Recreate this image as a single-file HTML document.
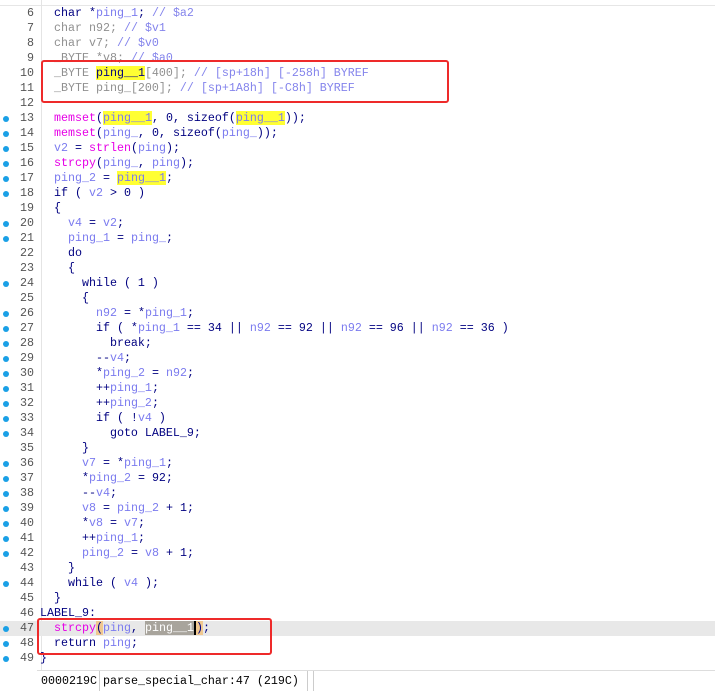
<!DOCTYPE html>
<html><head><meta charset="utf-8"><style>
body{margin:0;width:715px;height:690px;background:#fff;overflow:hidden;position:relative;font-family:"Liberation Mono",monospace;font-size:11.67px}
.top{position:absolute;left:0;top:0;width:715px;height:5px;border-bottom:1px solid #e6e6e6}
.gut{position:absolute;left:41px;top:0;width:1px;height:690px;background:#e4e4e4}
.l{position:absolute;left:0;height:15px;line-height:15px;white-space:pre;width:715px}
.n{position:absolute;left:0;width:34px;text-align:right;color:#555}
.d{position:absolute;left:3px;top:5px;width:6px;height:6px;border-radius:50%;background:#1aa0e6}
.c{position:absolute;left:40px;color:#000080}
.v{color:#7b7bef}.f{color:#e600e6}.cm{color:#8484ec}.g{color:#909090}.k{color:#000080}
.h{background:#ffff33}
.box{position:absolute;border:2px solid #ee2a2a;border-radius:3px}
.status{position:absolute;left:37px;top:670px;height:20px;width:678px;border-top:1px solid #ddd;background:#fff}
.status span{position:absolute;top:3px;color:#000}
</style></head><body>
<div class="top"></div>
<div class="gut"></div>

<div class="l" style="top:6px"><span class="n">6</span><span class="c">  char *<span class="v">ping_1</span>; <span class="cm">// $a2</span></span></div>
<div class="l" style="top:21px"><span class="n">7</span><span class="c g">  char n92; <span class="cm">// $v1</span></span></div>
<div class="l" style="top:36px"><span class="n">8</span><span class="c g">  char v7; <span class="cm">// $v0</span></span></div>
<div class="l" style="top:51px"><span class="n">9</span><span class="c g">  _BYTE *v8; <span class="cm">// $a0</span></span></div>
<div class="l" style="top:66px"><span class="n">10</span><span class="c g">  _BYTE <span class="k h">ping__1</span>[400]; <span class="cm">// [sp+18h] [-258h] BYREF</span></span></div>
<div class="l" style="top:81px"><span class="n">11</span><span class="c g">  _BYTE ping_[200]; <span class="cm">// [sp+1A8h] [-C8h] BYREF</span></span></div>
<div class="l" style="top:96px"><span class="n">12</span></div>
<div class="l" style="top:111px"><span class="d"></span><span class="n">13</span><span class="c">  <span class="f">memset</span>(<span class="v h">ping__1</span>, 0, sizeof(<span class="v h">ping__1</span>));</span></div>
<div class="l" style="top:126px"><span class="d"></span><span class="n">14</span><span class="c">  <span class="f">memset</span>(<span class="v">ping_</span>, 0, sizeof(<span class="v">ping_</span>));</span></div>
<div class="l" style="top:141px"><span class="d"></span><span class="n">15</span><span class="c">  <span class="v">v2</span> = <span class="f">strlen</span>(<span class="v">ping</span>);</span></div>
<div class="l" style="top:156px"><span class="d"></span><span class="n">16</span><span class="c">  <span class="f">strcpy</span>(<span class="v">ping_</span>, <span class="v">ping</span>);</span></div>
<div class="l" style="top:171px"><span class="d"></span><span class="n">17</span><span class="c">  <span class="v">ping_2</span> = <span class="v h">ping__1</span>;</span></div>
<div class="l" style="top:186px"><span class="d"></span><span class="n">18</span><span class="c">  if ( <span class="v">v2</span> &gt; 0 )</span></div>
<div class="l" style="top:201px"><span class="n">19</span><span class="c">  {</span></div>
<div class="l" style="top:216px"><span class="d"></span><span class="n">20</span><span class="c">    <span class="v">v4</span> = <span class="v">v2</span>;</span></div>
<div class="l" style="top:231px"><span class="d"></span><span class="n">21</span><span class="c">    <span class="v">ping_1</span> = <span class="v">ping_</span>;</span></div>
<div class="l" style="top:246px"><span class="n">22</span><span class="c">    do</span></div>
<div class="l" style="top:261px"><span class="n">23</span><span class="c">    {</span></div>
<div class="l" style="top:276px"><span class="d"></span><span class="n">24</span><span class="c">      while ( 1 )</span></div>
<div class="l" style="top:291px"><span class="n">25</span><span class="c">      {</span></div>
<div class="l" style="top:306px"><span class="d"></span><span class="n">26</span><span class="c">        <span class="v">n92</span> = *<span class="v">ping_1</span>;</span></div>
<div class="l" style="top:321px"><span class="d"></span><span class="n">27</span><span class="c">        if ( *<span class="v">ping_1</span> == 34 || <span class="v">n92</span> == 92 || <span class="v">n92</span> == 96 || <span class="v">n92</span> == 36 )</span></div>
<div class="l" style="top:336px"><span class="d"></span><span class="n">28</span><span class="c">          break;</span></div>
<div class="l" style="top:351px"><span class="d"></span><span class="n">29</span><span class="c">        --<span class="v">v4</span>;</span></div>
<div class="l" style="top:366px"><span class="d"></span><span class="n">30</span><span class="c">        *<span class="v">ping_2</span> = <span class="v">n92</span>;</span></div>
<div class="l" style="top:381px"><span class="d"></span><span class="n">31</span><span class="c">        ++<span class="v">ping_1</span>;</span></div>
<div class="l" style="top:396px"><span class="d"></span><span class="n">32</span><span class="c">        ++<span class="v">ping_2</span>;</span></div>
<div class="l" style="top:411px"><span class="d"></span><span class="n">33</span><span class="c">        if ( !<span class="v">v4</span> )</span></div>
<div class="l" style="top:426px"><span class="d"></span><span class="n">34</span><span class="c">          goto LABEL_9;</span></div>
<div class="l" style="top:441px"><span class="n">35</span><span class="c">      }</span></div>
<div class="l" style="top:456px"><span class="d"></span><span class="n">36</span><span class="c">      <span class="v">v7</span> = *<span class="v">ping_1</span>;</span></div>
<div class="l" style="top:471px"><span class="d"></span><span class="n">37</span><span class="c">      *<span class="v">ping_2</span> = 92;</span></div>
<div class="l" style="top:486px"><span class="d"></span><span class="n">38</span><span class="c">      --<span class="v">v4</span>;</span></div>
<div class="l" style="top:501px"><span class="d"></span><span class="n">39</span><span class="c">      <span class="v">v8</span> = <span class="v">ping_2</span> + 1;</span></div>
<div class="l" style="top:516px"><span class="d"></span><span class="n">40</span><span class="c">      *<span class="v">v8</span> = <span class="v">v7</span>;</span></div>
<div class="l" style="top:531px"><span class="d"></span><span class="n">41</span><span class="c">      ++<span class="v">ping_1</span>;</span></div>
<div class="l" style="top:546px"><span class="d"></span><span class="n">42</span><span class="c">      <span class="v">ping_2</span> = <span class="v">v8</span> + 1;</span></div>
<div class="l" style="top:561px"><span class="n">43</span><span class="c">    }</span></div>
<div class="l" style="top:576px"><span class="d"></span><span class="n">44</span><span class="c">    while ( <span class="v">v4</span> );</span></div>
<div class="l" style="top:591px"><span class="n">45</span><span class="c">  }</span></div>
<div class="l" style="top:606px"><span class="n">46</span><span class="c">LABEL_9:</span></div>
<div class="l" style="top:621px;background:#e8e8e8"><span class="d"></span><span class="n">47</span><span class="c">  <span class="f">strcpy</span><span style="background:#f0c890">(</span><span class="v">ping</span>, <span style="background:#a8a49c;color:#fff">ping__1</span><span style="background:#f0c890;border-left:2px solid #000">)</span>;</span></div>
<div class="l" style="top:636px"><span class="d"></span><span class="n">48</span><span class="c">  return <span class="v">ping</span>;</span></div>
<div class="l" style="top:651px"><span class="d"></span><span class="n">49</span><span class="c">}</span></div>

<div class="box" style="left:41px;top:60px;width:404px;height:39px"></div>
<div class="box" style="left:37px;top:618px;width:231px;height:33px"></div>

<div class="status"><span style="left:4px">0000219C</span><span style="left:62px;top:0;width:1px;height:20px;background:#ccc"></span><span style="left:66px">parse_special_char:47 (219C)</span><span style="left:270px;top:0;width:1px;height:20px;background:#ccc"></span><span style="left:276px;top:0;width:1px;height:20px;background:#ccc"></span></div>
</body></html>
